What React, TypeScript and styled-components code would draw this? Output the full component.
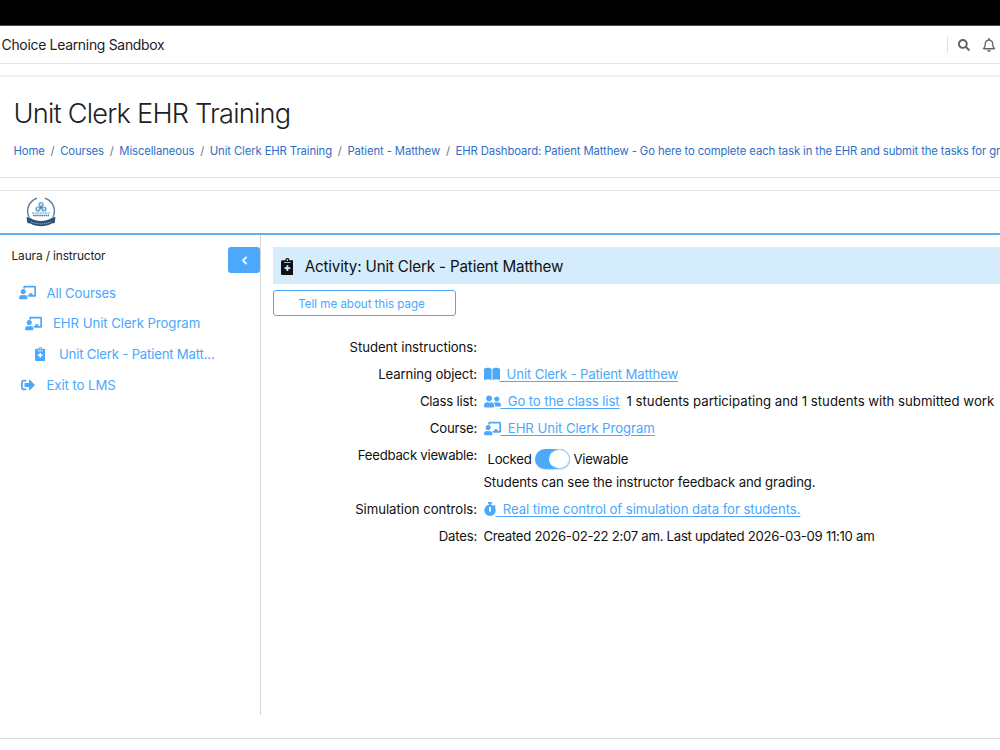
import React from "react";
import styled, { createGlobalStyle } from "styled-components";
import { FaSearch, FaRegBell, FaChalkboardTeacher, FaSignOutAlt, FaChevronLeft, FaUserFriends, FaStopwatch } from "react-icons/fa";
import { FaBookOpen } from "react-icons/fa6";

const BLUE = "#4ba8fb";

const Global = createGlobalStyle`
  * { box-sizing: border-box; }
  body { margin: 0; background: #fff; font-family: Inter, "Liberation Sans", sans-serif; overflow: hidden; }
  svg { display: block; flex: none; }
`;

const Page = styled.div`
  width: 1000px; height: 750px; overflow: hidden; color: #212529;
`;
const TopStrip = styled.div`height: 25px; background: #000;`;
const NavBar = styled.header`
  height: 39px; border-top: 1px solid #4a4a4a; border-bottom: 1px solid #e3e6e8; display: flex; align-items: center;
  padding-left: 1.5px; justify-content: space-between; white-space: nowrap;
`;
const SiteName = styled.div`font-size: 13.9px; letter-spacing: -0.27px; color: #1d2125;`;
const NavTools = styled.div`
  display: flex; align-items: center; height: 17px; border-left: 1px solid #dee2e6;
  padding-left: 10px; gap: 12px; padding-right: 4px; color: #5f6368;
`;
const CourseHeader = styled.section`
  margin-top: 11px; height: 103px; padding: 21px 0 0 13.5px;
  border-top: 2px solid #f1f1f1; border-bottom: 1px solid #e3e3e3; white-space: nowrap;
`;
const CourseTitle = styled.h1`
  margin: 0; font-size: 27.2px; line-height: 32px; font-weight: 300; letter-spacing: -0.78px; color: #1d2125;
`;
const Crumbs = styled.nav`
  display: flex; margin-top: 12.5px; font-size: 11.3px; line-height: 16px; color: #6a737b; letter-spacing: -0.11px;
`;
const Crumb = styled.a`
  color: #2f6fc4;
  & + &::before { content: "/"; color: #6a737b; padding: 0 5.6px 0 5.9px; }
`;
const Brand = styled.div`
  margin-top: 12px; height: 45px; padding: 4.5px 0 0 25px;
  border-top: 1px solid #e6e6e6; border-bottom: 2px solid #62aff0;
`;
const Body = styled.div`display: flex; height: 480px;`;
const Sidebar = styled.aside`
  width: 261px; border-right: 1px solid #d4d4d4; display: flex; justify-content: space-between; padding-top: 12px; color: #222;
`;
const Menu = styled.div`display: flex; flex-direction: column; white-space: nowrap;`;
const UserLine = styled.div`padding-left: 11.5px; font-size: 11.9px; line-height: 18px; letter-spacing: -0.13px; margin-bottom: 12.5px;`;
const MenuItem = styled.a<{ $indent: number; $gap: number; $ls: number }>`
  display: flex; align-items: center; height: 30.6px; padding-left: ${(p) => p.$indent}px; gap: ${(p) => p.$gap}px;
  font-size: 13.2px; letter-spacing: ${(p) => p.$ls}px; color: ${BLUE};
`;
const Collapse = styled.button`
  width: 32px; height: 26px; border: 0; border-radius: 3px; background: ${BLUE}; color: #fff;
  display: flex; align-items: center; justify-content: center; padding: 0;
  svg { stroke: currentColor; stroke-width: 30px; }
`;
const Main = styled.main`flex: 1; padding: 12px 0 0 12px; min-width: 0; color: #111;`;
const ActivityBar = styled.div`
  height: 37px; background: #d4ecfc; display: flex; align-items: center; gap: 11.5px; padding: 1px 0 0 7.5px;
  font-size: 15.2px; letter-spacing: -0.17px; color: #111;
`;
const TellMe = styled.button`
  margin-top: 6px; width: 183px; height: 26px; border: 1px solid ${BLUE}; border-radius: 3px; background: #fff;
  color: ${BLUE}; font: 11.6px Inter, sans-serif; letter-spacing: -0.04px; padding: 1px 6px 0 0; display: block;
`;
const Details = styled.div`padding-top: 18px;`;
const Row = styled.div<{ $h?: number }>`
  display: flex; height: ${(p) => p.$h ?? 26.9}px; font-size: 13.2px; line-height: 27px; white-space: nowrap;
`;
const Label = styled.div<{ $ls?: number }>`
  width: 204px; text-align: right; margin-right: 6.5px; flex: none; letter-spacing: ${(p) => p.$ls ?? -0.14}px;
`;
const IconLink = styled.a`display: flex; align-items: center; color: ${BLUE};`;
const TimerIcon = styled(FaStopwatch)`margin: 0 -1px;`;
const LinkText = styled.span<{ $ls?: number }>`
  text-decoration: underline; text-underline-offset: 1.5px; white-space: pre; letter-spacing: ${(p) => p.$ls ?? -0.08}px;
`;
const Note = styled.span`margin-left: 7px; letter-spacing: 0;`;
const Value = styled.span<{ $ls: number }>`letter-spacing: ${(p) => p.$ls}px;`;
const Feedback = styled.div`display: flex; flex-direction: column;`;
const ToggleLine = styled.div`
  display: flex; align-items: center; height: 27px; padding: 8px 0 0 4px; gap: 3.5px; letter-spacing: -0.28px;
`;
const Toggle = styled.span`
  width: 35px; height: 20px; border-radius: 10px; background: ${BLUE}; display: flex; justify-content: flex-end;
  box-shadow: 0 1px 1px rgba(0,0,0,.15); flex: none;
`;
const Knob = styled.span`width: 21px; height: 20px; border-radius: 50%; background: #fff; border: 1px solid #a9d3fa; border-left-color: #fff;`;
const FootRule = styled.div`margin-top: 23px; border-top: 1px solid #dcdcdc;`;

const Clipboard = ({ size }: { size: number }) => (
  <svg width={size * 0.75} height={size} viewBox="0 0 384 512" fill="currentColor">
    <path fillRule="evenodd" d="M336 64h-80a64 64 0 0 0-128 0H48C21 64 0 85 0 112v352c0 27 21 48 48 48h288c27 0 48-21 48-48V112c0-27-21-48-48-48zM192 40a24 24 0 1 1 0 48 24 24 0 0 1 0-48zM96 128h192v24H96zM164 216h56v60h60v56h-60v60h-56v-60h-60v-56h60z" />
  </svg>
);

const Logo = () => (
  <svg width="32" height="32" viewBox="0 0 32 32" fill="none">
    <path d="M12 2.200A13.500 13.500 0 0 0 4 21M20 2.200A13.500 13.500 0 0 1 28 21" stroke="#5f829e" strokeWidth="1.500" />
    <g stroke="#5d9dc9" strokeWidth="1.200" fill="#c9e0ef">
      <circle cx="16" cy="8.500" r="2" /><circle cx="13" cy="13" r="2" /><circle cx="19" cy="13" r="2" />
    </g>
    <circle cx="16" cy="11.800" r="1" fill="#2b6ea0" />
    <path d="M7 17h18" stroke="#8bbbdc" strokeWidth="1.500" strokeDasharray="2 .6" />
    <path d="M8 19.500h16" stroke="#4c7ba1" strokeWidth="1.600" strokeDasharray="1.600 .5" />
    <path d="M1.500 21l3 .5c6 4.500 17 4.500 23 0l3-.5-.8 6-3 .5c-6 3.600-15.400 3.600-21.400 0l-3-.5z" fill="#2b5478" />
    <path d="M6 25.800c6 2.800 14 2.800 20 0" stroke="#8ba6ba" strokeWidth="1" strokeDasharray="1.500 .7" />
  </svg>
);

const crumbs = ["Home", "Courses", "Miscellaneous", "Unit Clerk EHR Training", "Patient - Matthew",
  "EHR Dashboard: Patient Matthew - Go here to complete each task in the EHR and submit the tasks for grading"];

export default function App() {
  return (
    <Page>
      <Global />
      <TopStrip />
      <NavBar>
        <SiteName>Choice Learning Sandbox</SiteName>
        <NavTools><FaSearch size={12} /><FaRegBell size={14} /></NavTools>
      </NavBar>
      <CourseHeader>
        <CourseTitle>Unit Clerk EHR Training</CourseTitle>
        <Crumbs>{crumbs.map((c) => <Crumb key={c}>{c}</Crumb>)}</Crumbs>
      </CourseHeader>
      <Brand><Logo /></Brand>
      <Body>
        <Sidebar>
          <Menu>
            <UserLine>Laura / instructor</UserLine>
            <MenuItem $indent={19} $gap={10.5} $ls={-0.16}><FaChalkboardTeacher size={17} />All Courses</MenuItem>
            <MenuItem $indent={25} $gap={11} $ls={-0.06}><FaChalkboardTeacher size={17} />EHR Unit Clerk Program</MenuItem>
            <MenuItem $indent={34.5} $gap={14} $ls={-0.2}><Clipboard size={14} />Unit Clerk - Patient Matt...</MenuItem>
            <MenuItem $indent={20.5} $gap={12} $ls={-0.08}><FaSignOutAlt size={14} />Exit to LMS</MenuItem>
          </Menu>
          <Collapse><FaChevronLeft size={9} /></Collapse>
        </Sidebar>
        <Main>
          <ActivityBar><Clipboard size={17} />Activity: Unit Clerk - Patient Matthew</ActivityBar>
          <TellMe>Tell me about this page</TellMe>
          <Details>
            <Row><Label $ls={-0.06}>Student instructions:</Label></Row>
            <Row><Label>Learning object:</Label><IconLink><FaBookOpen size={16} /><LinkText $ls={-0.15}>{"  Unit Clerk - Patient Matthew"}</LinkText></IconLink></Row>
            <Row><Label $ls={-0.2}>Class list:</Label><IconLink><FaUserFriends size={17} /><LinkText $ls={-0.12}>{"  Go to the class list"}</LinkText></IconLink><Note>1 students participating and 1 students with submitted work</Note></Row>
            <Row><Label $ls={-0.22}>Course:</Label><IconLink><FaChalkboardTeacher size={17} /><LinkText $ls={-0.07}>{"  EHR Unit Clerk Program"}</LinkText></IconLink></Row>
            <Row $h={54}>
              <Label $ls={-0.26}>Feedback viewable:</Label>
              <Feedback>
                <ToggleLine>Locked<Toggle><Knob /></Toggle>Viewable</ToggleLine>
                <Value $ls={-0.13}>Students can see the instructor feedback and grading.</Value>
              </Feedback>
            </Row>
            <Row $h={27.2}><Label $ls={-0.04}>Simulation controls:</Label><IconLink><TimerIcon size={14} /><LinkText $ls={-0.07}>{"  Real time control of simulation data for students."}</LinkText></IconLink></Row>
            <Row><Label $ls={-0.2}>Dates:</Label><Value $ls={-0.29}>Created 2026-02-22 2:07 am. Last updated 2026-03-09 11:10 am</Value></Row>
          </Details>
        </Main>
      </Body>
      <FootRule />
    </Page>
  );
}
